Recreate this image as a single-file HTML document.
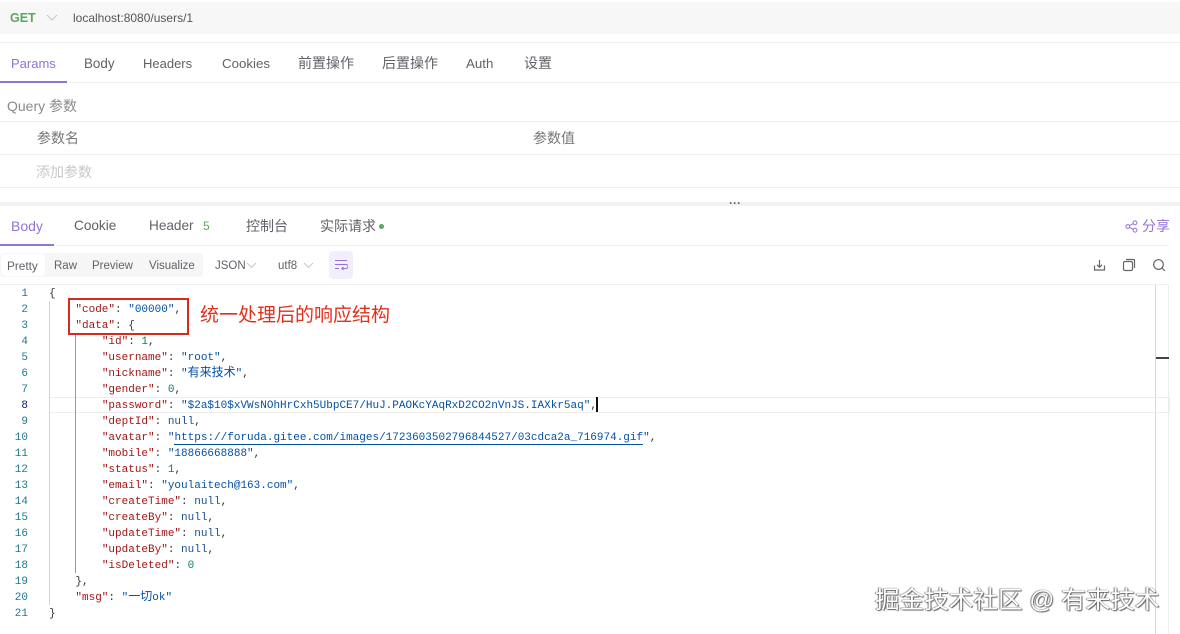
<!DOCTYPE html>
<html lang="zh"><head><meta charset="utf-8"><style>
html,body{margin:0;padding:0}
body{width:1180px;height:634px;position:relative;overflow:hidden;background:#fff;font-family:"Liberation Sans","Noto Sans CJK SC",sans-serif;color:#5f6368;font-size:13px}
.a{position:absolute;white-space:nowrap}
.r{position:absolute}
.t{line-height:18px;height:18px}
.c{font-size:14px}
.code{position:absolute;left:49px;top:286px;font:11px/16px "Liberation Mono",monospace;color:#333}
.code div{height:16px;white-space:pre}
.cj{font-family:"Noto Sans CJK SC",sans-serif;font-size:12px;line-height:0}
.k{color:#a31515}.s{color:#0451a5}.n{color:#098658}.u{color:#1d4f91}
.ln{position:absolute;left:0;width:28px;text-align:right;top:286px;font:11px/16px "Liberation Mono",monospace;color:#237893}
.ln div{height:16px}
</style></head><body>
<div class="r" style="left:0;top:2px;width:1180px;height:32px;background:#f7f7f7"></div>
<div class="a t" style="left:10px;top:9px;font-weight:bold;color:#5aa85f;font-size:12.5px">GET</div>
<svg class="r" style="left:46px;top:14px" width="12" height="8"><path d="M1 1l5 5 5-5" fill="none" stroke="#c8c8c8"/></svg>
<div class="a t" style="left:73px;top:9px;font-size:12px;color:#555">localhost:8080/users/1</div>
<div class="r" style="left:0;top:42px;width:1180px;height:1px;background:#f0f0f0"></div>
<div class="a t" style="left:11px;top:55px;color:#9373d3">Params</div>
<div class="r" style="left:0;top:81px;width:67px;height:2px;background:#9373d3"></div>
<div class="r" style="left:67px;top:82px;width:1113px;height:1px;background:#f0f0f0"></div>
<div class="a t" style="left:84px;top:55px;font-size:13.4px">Body</div>
<div class="a t" style="left:143px;top:55px">Headers</div>
<div class="a t" style="left:222px;top:55px;font-size:13.3px">Cookies</div>
<div class="a t c" style="left:298px;top:54px">前置操作</div>
<div class="a t c" style="left:382px;top:54px">后置操作</div>
<div class="a t" style="left:466px;top:55px;font-size:13.3px">Auth</div>
<div class="a t c" style="left:524px;top:54px">设置</div>
<div class="a t" style="left:7px;top:97px;color:#8a8a8a;font-size:14px">Query 参数</div>
<div class="r" style="left:0;top:121px;width:1180px;height:1px;background:#f0f0f0"></div>
<div class="a t c" style="left:37px;top:129px;color:#777">参数名</div>
<div class="a t c" style="left:533px;top:129px;color:#777">参数值</div>
<div class="r" style="left:0;top:154px;width:1180px;height:1px;background:#f0f0f0"></div>
<div class="a t c" style="left:36px;top:163px;color:#c8c8c8">添加参数</div>
<div class="r" style="left:0;top:187px;width:1180px;height:1px;background:#f0f0f0"></div>
<div class="r" style="left:0;top:202px;width:1180px;height:4px;background:#f1f1f1"></div>
<div class="a" style="left:729px;top:197px;font-size:12px;line-height:12px;color:#666;font-weight:bold">···</div>
<div class="a t" style="left:11px;top:217px;color:#9373d3;font-size:14px">Body</div>
<div class="r" style="left:0;top:244px;width:54px;height:2px;background:#9373d3"></div>
<div class="r" style="left:54px;top:245px;width:1114px;height:1px;background:#f0f0f0"></div>
<div class="a t" style="left:74px;top:217px;font-size:13.6px">Cookie</div>
<div class="a t" style="left:149px;top:217px;font-size:13.6px">Header</div>
<div class="a t" style="left:203px;top:217px;color:#5aa85f;font-size:12px">5</div>
<div class="a t c" style="left:246px;top:217px">控制台</div>
<div class="a t c" style="left:320px;top:217px">实际请求</div>
<div class="r" style="left:379px;top:224px;width:5px;height:5px;border-radius:50%;background:#5aa85f"></div>
<svg class="r" style="left:1125px;top:220px" width="13" height="13" fill="none" stroke="#9373d3" stroke-width="1"><circle cx="2.800" cy="6.500" r="1.900"/><circle cx="10" cy="2.800" r="1.900"/><circle cx="10" cy="10.200" r="1.900"/><path d="M4.500 5.600l3.800-2M4.500 7.400l3.800 2"/></svg>
<div class="a t c" style="left:1142px;top:217px;color:#9373d3">分享</div>
<div class="r" style="left:0;top:253px;width:203px;height:24px;background:#f6f6f6;border-radius:4px"></div>
<div class="r" style="left:1px;top:254px;width:44px;height:22px;background:#fff;border-radius:4px"></div>
<div class="a t" style="left:7px;top:257px;font-size:11.800px">Pretty</div>
<div class="a t" style="left:54px;top:257px;font-size:11.500px">Raw</div>
<div class="a t" style="left:92px;top:257px;font-size:11.500px">Preview</div>
<div class="a t" style="left:149px;top:257px;font-size:11.500px">Visualize</div>
<div class="a t" style="left:215px;top:257px;font-size:11.500px">JSON</div>
<svg class="r" style="left:246px;top:262px" width="11" height="7"><path d="M1 1l4.500 4.500L10 1" fill="none" stroke="#c8c8c8"/></svg>
<div class="a t" style="left:278px;top:257px;font-size:11.500px">utf8</div>
<svg class="r" style="left:303px;top:262px" width="11" height="7"><path d="M1 1l4.500 4.500L10 1" fill="none" stroke="#c8c8c8"/></svg>
<div class="r" style="left:329px;top:251px;width:24px;height:28px;background:#f2eefb;border-radius:4px"></div>
<svg class="r" style="left:334px;top:259px" width="14" height="12" fill="none" stroke="#9373d3" stroke-width="1.100"><path d="M1 1.500h12M1 5.500h11a1.800 1.800 0 0 1 0 4H8M9.500 8l-1.600 1.500 1.600 1.500M1 9.500h4"/></svg>
<svg class="r" style="left:1092px;top:258px" width="15" height="15" fill="none" stroke="#666" stroke-width="1.200"><path d="M7.500 2v7M5 6.800l2.500 2.500L10 6.800M2.500 7.500v4.500h10V7.500"/></svg>
<svg class="r" style="left:1122px;top:258px" width="14" height="14" fill="none" stroke="#666" stroke-width="1.200"><rect x="1.500" y="3.500" width="9" height="9" rx="1.500"/><path d="M4 1.500h7.500a1 1 0 0 1 1 1V10"/></svg>
<svg class="r" style="left:1152px;top:258px" width="14" height="14" fill="none" stroke="#666" stroke-width="1.200"><circle cx="6.500" cy="6.500" r="4.800"/><path d="M10 10l3 3"/></svg>
<div class="r" style="left:0;top:284px;width:1168px;height:1px;background:#f0f0f0"></div>
<div class="r" style="left:1155px;top:285px;width:1px;height:349px;background:#d8d8d8"></div>
<div class="r" style="left:1168px;top:285px;width:1px;height:349px;background:#ececec"></div>
<div class="r" style="left:1156px;top:357px;width:13px;height:1.500px;background:#444"></div>
<div class="r" style="left:49px;top:397px;width:1119px;height:14px;border:1px solid #eee"></div>
<div class="r" style="left:49px;top:301px;width:1px;height:304px;background:#d3d3d3"></div>
<div class="r" style="left:75px;top:333px;width:1px;height:240px;background:#999"></div>
<div class="ln"><div>1</div><div>2</div><div>3</div><div>4</div><div>5</div><div>6</div><div>7</div><div style="color:#0b216f">8</div><div>9</div><div>10</div><div>11</div><div>12</div><div>13</div><div>14</div><div>15</div><div>16</div><div>17</div><div>18</div><div>19</div><div>20</div><div>21</div></div>
<div class="code"><div>{</div>
<div>    <span class="k">"code"</span>: <span class="s">"00000"</span>,</div>
<div>    <span class="k">"data"</span>: {</div>
<div>        <span class="k">"id"</span>: <span class="n">1</span>,</div>
<div>        <span class="k">"username"</span>: <span class="s">"root"</span>,</div>
<div>        <span class="k">"nickname"</span>: <span class="s">"<span class="cj">有来技术</span>"</span>,</div>
<div>        <span class="k">"gender"</span>: <span class="n">0</span>,</div>
<div>        <span class="k">"password"</span>: <span class="s">"$2a$10$xVWsNOhHrCxh5UbpCE7/HuJ.PAOKcYAqRxD2CO2nVnJS.IAXkr5aq"</span>,</div>
<div>        <span class="k">"deptId"</span>: <span class="u">null</span>,</div>
<div>        <span class="k">"avatar"</span>: <span class="s">"<span style="border-bottom:1px solid #0451a5">https://foruda.gitee.com/images/1723603502796844527/03cdca2a_716974.gif</span>"</span>,</div>
<div>        <span class="k">"mobile"</span>: <span class="s">"18866668888"</span>,</div>
<div>        <span class="k">"status"</span>: <span class="n">1</span>,</div>
<div>        <span class="k">"email"</span>: <span class="s">"youlaitech@163.com"</span>,</div>
<div>        <span class="k">"createTime"</span>: <span class="u">null</span>,</div>
<div>        <span class="k">"createBy"</span>: <span class="u">null</span>,</div>
<div>        <span class="k">"updateTime"</span>: <span class="u">null</span>,</div>
<div>        <span class="k">"updateBy"</span>: <span class="u">null</span>,</div>
<div>        <span class="k">"isDeleted"</span>: <span class="n">0</span></div>
<div>    },</div>
<div>    <span class="k">"msg"</span>: <span class="s">"<span class="cj">一切</span>ok"</span></div>
<div>}</div></div>
<div class="r" style="left:596px;top:397px;width:2px;height:15px;background:#111"></div>
<div class="r" style="left:68px;top:298px;width:117px;height:33px;border:2px solid #d9281e"></div>
<div class="a" style="left:200px;top:304px;font-size:19px;line-height:24px;color:#e0301e">统一处理后的响应结构</div>
<div class="a" style="left:875px;top:587px;font-size:24.600px;line-height:28px;color:#fff;text-shadow:0 0 1px #555,1px 1px 1px #666,-1px 0 1px #888">掘金技术社区 @ 有来技术</div>
</body></html>
